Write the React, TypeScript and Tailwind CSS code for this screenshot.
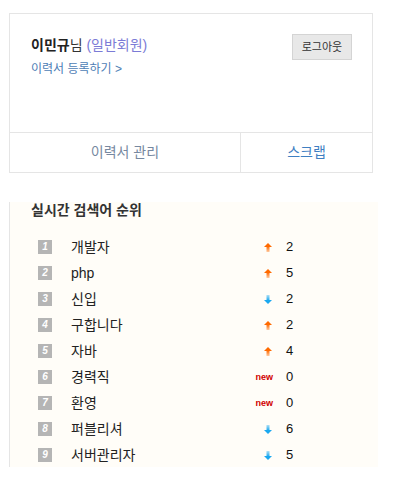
import React from "react";

type Move = "up" | "down" | "new";

const keywords: { word: string; move: Move; count: number }[] = [
  { word: "개발자", move: "up", count: 2 },
  { word: "php", move: "up", count: 5 },
  { word: "신입", move: "down", count: 2 },
  { word: "구합니다", move: "up", count: 2 },
  { word: "자바", move: "up", count: 4 },
  { word: "경력직", move: "new", count: 0 },
  { word: "환영", move: "new", count: 0 },
  { word: "퍼블리셔", move: "down", count: 6 },
  { word: "서버관리자", move: "down", count: 5 },
];

const font = { fontFamily: '"Liberation Sans", "Noto Sans CJK KR", sans-serif' };

const Arrow = ({ dir }: { dir: "up" | "down" }) => {
  const color = dir === "up" ? "#ff6a00" : "#1aa8f0";
  const id = `g-${dir}`;
  return (
    <svg width="8" height="9" viewBox="0 0 8 9" className="block">
      <defs>
        <linearGradient id={id} x1="0" y1={dir === "up" ? "0" : "1"} x2="0" y2={dir === "up" ? "1" : "0"}>
          <stop offset="0.4" stopColor={color} />
          <stop offset="1" stopColor={color} stopOpacity="0.35" />
        </linearGradient>
      </defs>
      {dir === "up" ? (
        <path d="M4 0 L8 4 L5.5 4 L5.5 9 L2.5 9 L2.5 4 L0 4 Z" fill={`url(#${id})`} />
      ) : (
        <path d="M4 9 L8 5 L5.5 5 L5.5 0 L2.5 0 L2.5 5 L0 5 Z" fill={`url(#${id})`} />
      )}
    </svg>
  );
};

export default function App() {
  return (
    <div className="pl-[9px] pt-[13px] bg-white min-h-screen" style={font}>
      {/* member card */}
      <div className="w-[364px] border border-[#e5e5e5]">
        <div className="h-[118px] flex justify-between pl-[21px] pr-[20px] pt-[20px]">
          <div>
            <div className="text-[14px] leading-[20px] mt-[1px]">
              <span className="font-bold text-[#222]">이민규</span>
              <span className="text-[#333]">님 </span>
              <span className="text-[#7b7bd6]">(일반회원)</span>
            </div>
            <div className="mt-[7px] text-[12px] leading-[14px] text-[#4d7db5]">이력서 등록하기 &gt;</div>
          </div>
          <button className="h-[26px] w-[60px] bg-[#e8e8e8] border border-[#d4d4d4] text-[11px] text-[#333] leading-none">
            로그아웃
          </button>
        </div>
        <div className="flex h-[40px] border-t border-[#e5e5e5] text-[14px]">
          <div className="w-[231px] flex items-center justify-center text-[#7688a0] border-r border-[#e5e5e5]">
            이력서 관리
          </div>
          <div className="flex-1 flex items-center justify-center text-[#3f7fc2]">스크랩</div>
        </div>
      </div>

      {/* realtime ranking */}
      <div className="mt-[29px] w-[369px] h-[265px] bg-[#fffdf8] border-l border-[#e5e5e5]">
        <h3 className="pl-[21px] text-[14px] leading-[16px] font-bold text-[#333]">실시간 검색어 순위</h3>
        <ul className="mt-[16px]">
          {keywords.map((k, i) => (
            <li key={k.word} className="flex items-center h-[26px] pl-[28px]">
              <span className="w-[14px] h-[14px] bg-[#b5b5b5] text-white text-[10px] font-bold italic flex items-center justify-center leading-none">
                {i + 1}
              </span>
              <span className="ml-[19px] w-[175px] text-[14px] text-[#222]">{k.word}</span>
              <span className="w-[27px] flex justify-end">
                {k.move === "new" ? (
                  <span className="text-[9px] font-bold text-[#d00000] leading-none">new</span>
                ) : (
                  <span className="pr-[1px]">
                    <Arrow dir={k.move} />
                  </span>
                )}
              </span>
              <span className="ml-[13px] text-[13px] text-[#111]">{k.count}</span>
            </li>
          ))}
        </ul>
      </div>
    </div>
  );
}
